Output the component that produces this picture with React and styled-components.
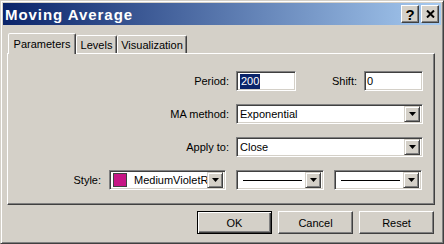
import React from "react";
import styled, { createGlobalStyle } from "styled-components";

const Global = createGlobalStyle`
  html, body { margin: 0; padding: 0; background: #d4d0c8; }
  body { font-family: "Liberation Sans", Arial, sans-serif; font-size: 11px; color: #000; }
`;

const Window = styled.div`
  width: 444px;
  height: 244px;
  box-sizing: border-box;
  background: #d4d0c8;
  border: 1px solid;
  border-color: #d4d0c8 #404040 #404040 #d4d0c8;
  box-shadow: inset 1px 1px #fff, inset -1px -1px #808080;
  padding: 2px;
  display: flex;
  flex-direction: column;
`;

const TitleBar = styled.div`
  height: 22px;
  flex: none;
  background: linear-gradient(to right, #0a246a, #a6caf0);
  display: flex;
  align-items: center;
  padding: 0 2px 0 2px;
`;

const Title = styled.div`
  flex: 1;
  color: #fff;
  font-weight: bold;
  font-size: 15px;
  letter-spacing: 0.95px;
  white-space: nowrap;
`;

const CaptionButtons = styled.div`
  display: flex;
  gap: 2px;
`;

const CaptionButton = styled.div`
  width: 18px;
  height: 18px;
  box-sizing: border-box;
  background: #d4d0c8;
  border: 1px solid;
  border-color: #fff #404040 #404040 #fff;
  box-shadow: inset -1px -1px #808080;
  display: flex;
  align-items: center;
  justify-content: center;
  font-weight: bold;
  font-size: 15px;
  line-height: 1;
  color: #000;
`;

const Body = styled.div`
  flex: 1;
  padding: 8px 6px 0 4px;
  display: flex;
  flex-direction: column;
`;

const TabRow = styled.div`
  height: 20px;
  display: flex;
  align-items: flex-end;
  padding-left: 1px;
`;

const Tab = styled.div`
  width: ${(p) => p.$w}px;
  height: ${(p) => (p.$active ? 21 : 18)}px;
  margin-bottom: ${(p) => (p.$active ? -1 : 0)}px;
  box-sizing: border-box;
  background: #d4d0c8;
  border: 1px solid;
  border-bottom: none;
  border-color: #fff #404040 transparent #fff;
  border-radius: 2px 2px 0 0;
  box-shadow: inset -1px 0 #808080;
  display: flex;
  align-items: center;
  justify-content: center;
  padding-top: ${(p) => (p.$active ? 0 : 1)}px;
  white-space: nowrap;
  position: relative;
  z-index: ${(p) => (p.$active ? 2 : 1)};
`;

const Panel = styled.div`
  width: 428px;
  height: 152px;
  box-sizing: border-box;
  border: 1px solid;
  border-color: #fff #404040 #404040 #fff;
  box-shadow: inset -1px -1px #808080;
  padding: 17px 0 0 0;
  display: flex;
  flex-direction: column;
  gap: 13px;
`;

const Row = styled.div`
  display: grid;
  grid-template-columns: ${(p) => p.$cols};
  column-gap: ${(p) => p.$gap || "7px"};
  align-items: center;
  height: 20px;
`;

const Label = styled.div`
  text-align: right;
  white-space: nowrap;
  margin-right: ${(p) => p.$pull || 0}px;
`;

const Split = styled.div`
  display: flex;
  justify-content: space-between;
  align-items: center;
`;

const Group = styled.div`
  display: flex;
  align-items: center;
  gap: 7px;
`;

const Field = styled.div`
  box-sizing: border-box;
  width: ${(p) => (p.$w ? `${p.$w}px` : "auto")};
  height: 20px;
  background: #fff;
  border: 1px solid;
  border-color: #808080 #fff #fff #808080;
  box-shadow: inset 1px 1px #404040, inset -1px -1px #d4d0c8;
  display: flex;
  align-items: center;
  padding: 2px;
  overflow: hidden;
`;

const FieldText = styled.span`
  padding-left: 0;
  white-space: nowrap;
`;

const Selected = styled.span`
  background: #0a246a;
  color: #fff;
  padding: 1px 1px 2px;
  margin-left: 1px;
`;

const SelectText = styled.span`
  flex: 1;
  min-width: 0;
  overflow: hidden;
  white-space: nowrap;
  padding-left: 1px;
`;

const DropButton = styled.div`
  width: 16px;
  height: 16px;
  flex: none;
  box-sizing: border-box;
  background: #d4d0c8;
  border: 1px solid;
  border-color: #d4d0c8 #404040 #404040 #d4d0c8;
  box-shadow: inset 1px 1px #fff, inset -1px -1px #808080;
  display: flex;
  align-items: center;
  justify-content: center;
  margin-left: auto;
`;

const Swatch = styled.div`
  width: 14px;
  height: 14px;
  flex: none;
  box-sizing: border-box;
  background: ${(p) => p.$color};
  border: 1px solid #404040;
  margin: 0 6px 0 1px;
`;

const Line = styled.div`
  width: 59px;
  height: 1px;
  background: #000;
  margin-left: 4px;
  flex: none;
`;

const ButtonRow = styled.div`
  width: 428px;
  display: flex;
  justify-content: flex-end;
  gap: 6px;
  margin-top: 6px;
  padding-right: 1px;
  box-sizing: border-box;
`;

const Button = styled.div`
  width: 75px;
  height: 23px;
  box-sizing: border-box;
  background: #d4d0c8;
  border: 1px solid;
  border-color: ${(p) => (p.$default ? "#000" : "#fff #404040 #404040 #fff")};
  box-shadow: ${(p) =>
    p.$default
      ? "inset 1px 1px #fff, inset -1px -1px #404040, inset -2px -2px #808080"
      : "inset -1px -1px #808080"};
  display: flex;
  align-items: center;
  justify-content: center;
`;

const Arrow = () => (
  <svg width="7" height="4" viewBox="0 0 7 4">
    <path d="M0 0h7L3.5 4z" fill="#000" />
  </svg>
);

const Select = ({ w, children }) => (
  <Field $w={w}>
    {children}
    <DropButton>
      <Arrow />
    </DropButton>
  </Field>
);

export default function App() {
  return (
    <>
      <Global />
      <Window>
        <TitleBar>
          <Title>Moving Average</Title>
          <CaptionButtons>
            <CaptionButton>?</CaptionButton>
            <CaptionButton>
              <svg width="9" height="8" viewBox="0 0 9 8">
                <path d="M1 0.5L8 7.5M8 0.5L1 7.5" stroke="#000" strokeWidth="2" />
              </svg>
            </CaptionButton>
          </CaptionButtons>
        </TitleBar>
        <Body>
          <TabRow>
            <Tab $active $w={68}>Parameters</Tab>
            <Tab $w={41}>Levels</Tab>
            <Tab $w={70}>Visualization</Tab>
          </TabRow>
          <Panel>
            <Row $cols="221px 187px">
              <Label>Period:</Label>
              <Split>
                <Field $w={60}>
                  <Selected>200</Selected>
                </Field>
                <Group>
                  <Label>Shift:</Label>
                  <Field $w={59}>
                    <FieldText>0</FieldText>
                  </Field>
                </Group>
              </Split>
            </Row>
            <Row $cols="221px 187px">
              <Label>MA method:</Label>
              <Select>
                <SelectText>Exponential</SelectText>
              </Select>
            </Row>
            <Row $cols="221px 187px">
              <Label>Apply to:</Label>
              <Select>
                <SelectText>Close</SelectText>
              </Select>
            </Row>
            <Row $cols="91px 117px 88px 88px" $gap="10px">
              <Label $pull={-2}>Style:</Label>
              <Select>
                <Swatch $color="#c71585" />
                <SelectText>MediumVioletR</SelectText>
              </Select>
              <Select>
                <Line />
              </Select>
              <Select>
                <Line />
              </Select>
            </Row>
          </Panel>
          <ButtonRow>
            <Button $default>OK</Button>
            <Button>Cancel</Button>
            <Button>Reset</Button>
          </ButtonRow>
        </Body>
      </Window>
    </>
  );
}
